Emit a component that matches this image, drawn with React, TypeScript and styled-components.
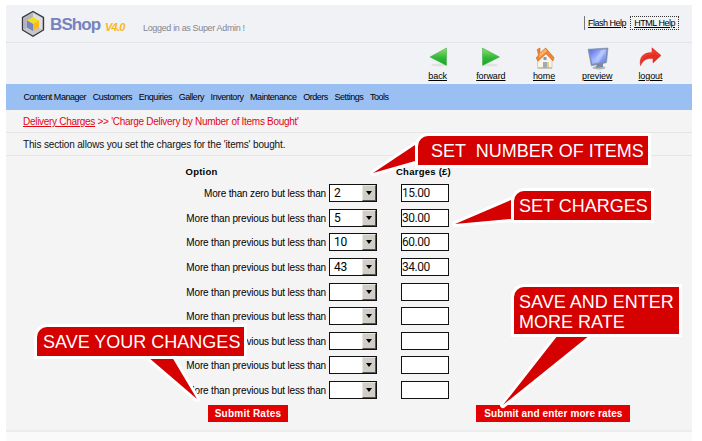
import React from "react";
import styled, { createGlobalStyle } from "styled-components";

const GlobalStyle = createGlobalStyle`
  *, *::before, *::after { box-sizing: border-box; }
  body { margin: 0; background: #fff; font-family: "Liberation Sans", Arial, sans-serif; color: #000; }
  button, input { font-family: inherit; border-radius: 0; }
`;

const Page = styled.div`
  position: relative;
  width: 702px;
  height: 441px;
  padding: 5px 10px 0 6px;
  overflow: hidden;
  background: #fff;
`;

const Header = styled.header`
  display: flex;
  align-items: flex-start;
  height: 38px;
  background: #f1f2f6;
  border-bottom: 1px solid #e2e3e7;
`;

const Logo = styled.svg`
  flex: none;
  width: 24px;
  height: 28px;
  margin: 5px 0 0 15px;
`;

const Brand = styled.div`
  width: 51px;
  margin: 10px 0 0 5px;
  font: bold 17px/20px "Liberation Sans", Arial, sans-serif;
  letter-spacing: -0.9px;
  color: #7683bd;
  white-space: nowrap;
`;

const Version = styled.div`
  width: 38px;
  margin: 16px 0 0 4px;
  font: italic bold 11px/13px "Liberation Sans", Arial, sans-serif;
  letter-spacing: -0.75px;
  color: #f9b71b;
`;

const LoginNote = styled.div`
  margin-top: 18px;
  font-size: 9px;
  line-height: 11px;
  letter-spacing: -0.34px;
  color: #858590;
  white-space: nowrap;
`;

const HelpLinks = styled.div`
  display: flex;
  margin: 11px 13px 0 auto;
  height: 14px;
  gap: 4px;
  padding-left: 3px;
  border-left: 1px solid #777;
`;

const HelpLink = styled.a<{ $focused?: boolean }>`
  padding: 0 ${(p) => (p.$focused ? "4px" : "0")};
  outline: ${(p) => (p.$focused ? "1px dotted #333" : "none")};
  outline-offset: -1px;
  font-size: 9px;
  line-height: 14px;
  letter-spacing: -0.48px;
  text-decoration: underline;
  white-space: nowrap;
`;

const Toolbar = styled.div`
  display: grid;
  grid-template-columns: repeat(5, 53.2px);
  justify-content: end;
  height: 41px;
  padding-right: 15px;
  background: #f1f2f6;
`;

const Tool = styled.a`
  display: flex;
  flex-direction: column;
  align-items: center;
  padding-top: 3px;
  font-size: 9px;
  line-height: 10px;
  letter-spacing: -0.1px;
  text-decoration: underline;
  svg { width: 24px; height: 24px; margin-bottom: 1px; }
`;

const Menu = styled.nav`
  display: flex;
  gap: 6.6px;
  height: 26px;
  padding-left: 17.5px;
  background: #9abff3;
`;

const MenuItem = styled.span`
  font-size: 9px;
  line-height: 27px;
  letter-spacing: -0.46px;
  white-space: nowrap;
`;

const Strip = styled.div<{ $height: number; $red?: boolean }>`
  height: ${(p) => p.$height}px;
  padding-left: 17px;
  background: #f4f4f4;
  border-bottom: 1px solid #e6e6e9;
  font-size: 10px;
  line-height: 23px;
  letter-spacing: ${(p) => (p.$red ? -0.29 : -0.15)}px;
  color: ${(p) => (p.$red ? "#e30613" : "#111")};
  white-space: nowrap;
  a { text-decoration: underline; }
`;

const Form = styled.main`
  height: 276px;
  padding-top: 9px;
  background: #f4f4f4;
  border-bottom: 2px solid #ececec;
`;

const Headings = styled.div`
  display: grid;
  grid-template-columns: 210.5px 1fr;
  height: 19.4px;
  padding-left: 179.5px;
  font-size: 9.5px;
  font-weight: bold;
  line-height: 13px;
  letter-spacing: 0.25px;
`;

const RateRow = styled.label`
  display: grid;
  grid-template-columns: 320px 48px 48px;
  column-gap: 0;
  height: 24.55px;
  > :nth-child(2) { margin-left: 3px; }
  > :nth-child(3) { margin-left: 27px; }
`;

const RateLabel = styled.span`
  font-size: 10px;
  line-height: 20px;
  letter-spacing: -0.17px;
  text-align: right;
  white-space: nowrap;
`;

const Select = styled.div`
  display: flex;
  width: 48px;
  height: 18px;
  border: 1px solid #111;
  border-right-width: 1.5px;
  background: #fff;
  font: 12px/17px Roboto, sans-serif;
  letter-spacing: -0.3px;
  padding-left: 4px;
`;

const Arrow = styled.span`
  display: grid;
  place-items: center;
  width: 14px;
  height: 16px;
  margin-left: auto;
  background: #d1cec7;
  border: 1px solid #e9e7e2;
  border-right-color: #555;
  border-bottom-color: #555;
  &::after {
    content: "";
    border: 3px solid transparent;
    border-top: 4px solid #000;
    border-bottom: 0;
  }
`;

const Amount = styled.input`
  width: 48px;
  height: 18px;
  padding: 0;
  border: 1px solid #111;
  background: #fff;
  font: 12px/16px Roboto, sans-serif;
  letter-spacing: -0.5px;
  color: #111;
`;

const Actions = styled.div`
  display: flex;
  gap: 188.4px;
  padding: 0 0 0 202px;
`;

const Submit = styled.button<{ $width: number; $spacing: number }>`
  width: ${(p) => p.$width}px;
  height: 17px;
  padding: 0;
  border: 0;
  background: #e30000;
  color: #fff;
  font: bold 10px/17px "Liberation Sans", Arial, sans-serif;
  letter-spacing: ${(p) => p.$spacing}px;
  white-space: nowrap;
`;

const Footer = styled.footer`
  height: 10px;
  background: #fafafa;
`;

const Tails = styled.svg`
  position: absolute;
  inset: 0;
  width: 702px;
  height: 441px;
  pointer-events: none;
`;

const Callout = styled.div<{ $x: number; $y: number; $w: number; $h: number; $pad?: number; $ls?: number }>`
  position: absolute;
  left: ${(p) => p.$x}px;
  top: ${(p) => p.$y}px;
  width: ${(p) => p.$w}px;
  height: ${(p) => p.$h}px;
  padding: 5px 0 0 ${(p) => p.$pad ?? 6}px;
  border-radius: 10px 0 0 0;
  background: #d50000;
  box-shadow: 0 0 0 3px #fff;
  color: #fff;
  font-size: 18px;
  line-height: 20px;
  letter-spacing: ${(p) => p.$ls ?? 0}px;
  white-space: pre;
`;

const BackIcon = () => (
  <svg viewBox="0 0 24 24">
    <defs>
      <linearGradient id="green" x2="0" y2="1">
        <stop stopColor="#8be267" /><stop offset=".55" stopColor="#32b83a" /><stop offset="1" stopColor="#16a62c" />
      </linearGradient>
    </defs>
    <ellipse cx="13" cy="19" rx="8" ry="1.5" fill="#dfe3df" />
    <path d="M4 11 20.5 2V19.4Z" fill="url(#green)" stroke="#35a83b" strokeWidth=".5" />
  </svg>
);

const ForwardIcon = () => (
  <svg viewBox="0 0 24 24">
    <ellipse cx="11" cy="19" rx="8" ry="1.5" fill="#dfe3df" />
    <path d="M20.5 11 3.5 2V19.4Z" fill="url(#green)" stroke="#35a83b" strokeWidth=".5" />
  </svg>
);

const HomeIcon = () => (
  <svg viewBox="0 0 24 24">
    <path d="M5.5 12 13 6 20 12V22H5.5Z" fill="#f8f5ed" stroke="#c9bca8" strokeWidth=".7" />
    <path d="M5.2 3.5 8 2V7L13.7 2 22 11.6 21 15 14 7.7 6 15.2 4.2 12 6.5 9Z" fill="#ed8733" stroke="#c96320" strokeWidth=".6" />
    <path d="M8 7 13.5 3 15 5 7 12Z" fill="#ffb167" />
    <path d="M11.5 11h3v3h-3z" fill="#7998d5" />
    <path d="M11 16h4v6h-4z" fill="#9eabb9" />
    <path d="M15 16h2v6h-2z" fill="#e8cf82" />
    <path d="M6 22h14" stroke="#b3aaa0" />
  </svg>
);

const PreviewIcon = () => (
  <svg viewBox="0 0 24 24">
    <defs><linearGradient id="screen" x2="1" y2="1"><stop stopColor="#506be0" /><stop offset=".5" stopColor="#a9baff" /><stop offset="1" stopColor="#5877e7" /></linearGradient></defs>
    <ellipse cx="14" cy="21.8" rx="6.5" ry="1.7" fill="#aeb7c1" />
    <path d="M12 17 18 16 18 21 11 22Z" fill="#7c899a" />
    <path d="M3 3.2 23 2 21.5 16.7 6.3 19.8Z" fill="#8191b5" stroke="#717ea1" strokeWidth=".5" />
    <path d="M4.5 4.3 21.5 3.4 20.1 15.5 7.3 18Z" fill="url(#screen)" />
    <path d="M9 17 16 3.7 20.8 3.5 14 16.3Z" fill="#d6deff" opacity=".4" />
  </svg>
);

const LogoutIcon = () => (
  <svg viewBox="0 0 24 24">
    <path d="M2.5 19.7C.7 11 6 6.4 14 6.6V1.8L23 9.5 15 17V12.6C8.5 12 5 14 2.5 19.7Z" fill="#e52f20" stroke="#d12d20" strokeWidth=".5" />
    <path d="M3.5 13.5C6 8.7 10 7.8 15 7.8V4.5L20.5 9.3" fill="none" stroke="#f4573f" strokeWidth=".7" />
  </svg>
);

const tools = [
  ["back", BackIcon], ["forward", ForwardIcon], ["home", HomeIcon], ["preview", PreviewIcon], ["logout", LogoutIcon],
] as const;

const menu = ["Content Manager", "Customers", "Enquiries", "Gallery", "Inventory", "Maintenance", "Orders", "Settings", "Tools"];

const rates = [["2", "15.00"], ["5", "30.00"], ["10", "60.00"], ["43", "34.00"], ["", ""], ["", ""], ["", ""], ["", ""], ["", ""]];

export default function App() {
  return (
    <>
      <GlobalStyle />
      <Page>
        <Header>
          <Logo viewBox="0 0 24 28">
            <path d="M12 1.5 22.5 7.5V20L12 26.3 1.5 20V7.5Z" fill="#c6c7ca" stroke="#333640" strokeWidth="1.3" />
            <path d="M12 3 21 8.3V19.3L12 14Z" fill="#dedfe1" />
            <path d="M12 3 3 8.3V19.3L12 14Z" fill="#b3b5ba" />
            <path d="M12 7 18 10.5 12 14 6 10.5Z" fill="#f0df20" />
            <path d="M6 10.5 12 14V21L6 17.5Z" fill="#7883c4" />
            <path d="M18 10.5 12 14V21L18 17.5Z" fill="#f8bd1d" />
          </Logo>
          <Brand>BShop</Brand>
          <Version>V4.0</Version>
          <LoginNote>Logged in as Super Admin !</LoginNote>
          <HelpLinks>
            <HelpLink>Flash Help</HelpLink>
            <HelpLink $focused>HTML Help</HelpLink>
          </HelpLinks>
        </Header>
        <Toolbar>
          {tools.map(([name, Icon]) => <Tool key={name}><Icon />{name}</Tool>)}
        </Toolbar>
        <Menu>{menu.map((item) => <MenuItem key={item}>{item}</MenuItem>)}</Menu>
        <Strip $height={23} $red><a>Delivery Charges</a> &gt;&gt; 'Charge Delivery by Number of Items Bought'</Strip>
        <Strip $height={23}>This section allows you set the charges for the 'items' bought.</Strip>
        <Form>
          <Headings><span>Option</span><span>Charges (£)</span></Headings>
          {rates.map(([count, charge], i) => (
            <RateRow key={i}>
              <RateLabel>More than {i === 0 ? "zero" : "previous"} but less than</RateLabel>
              <Select>{count}<Arrow /></Select>
              <Amount defaultValue={charge} />
            </RateRow>
          ))}
          <Actions>
            <Submit $width={80} $spacing={0.22}>Submit Rates</Submit>
            <Submit $width={154} $spacing={0.1}>Submit and enter more rates</Submit>
          </Actions>
        </Form>
        <Footer />
        <Tails viewBox="0 0 702 441">
          <g fill="#d50000" stroke="#fff" strokeWidth="6" strokeLinejoin="round" paintOrder="stroke">
            <path d="M415 145V161L373 173Z" />
            <path d="M511 200V219L455 224Z" />
            <path d="M148 357H172L197 399Z" />
            <path d="M558 335H590L503 405Z" />
          </g>
        </Tails>
        <Callout $x={418} $y={136} $w={230} $h={29} $pad={13}>SET  NUMBER OF ITEMS</Callout>
        <Callout $x={514} $y={191} $w={137} $h={29} $pad={5}>SET CHARGES</Callout>
        <Callout $x={37} $y={327} $w={207} $h={29}>SAVE YOUR CHANGES</Callout>
        <Callout $x={514} $y={287} $w={165} $h={47} $pad={5}>{"SAVE AND ENTER\nMORE RATE"}</Callout>
      </Page>
    </>
  );
}
